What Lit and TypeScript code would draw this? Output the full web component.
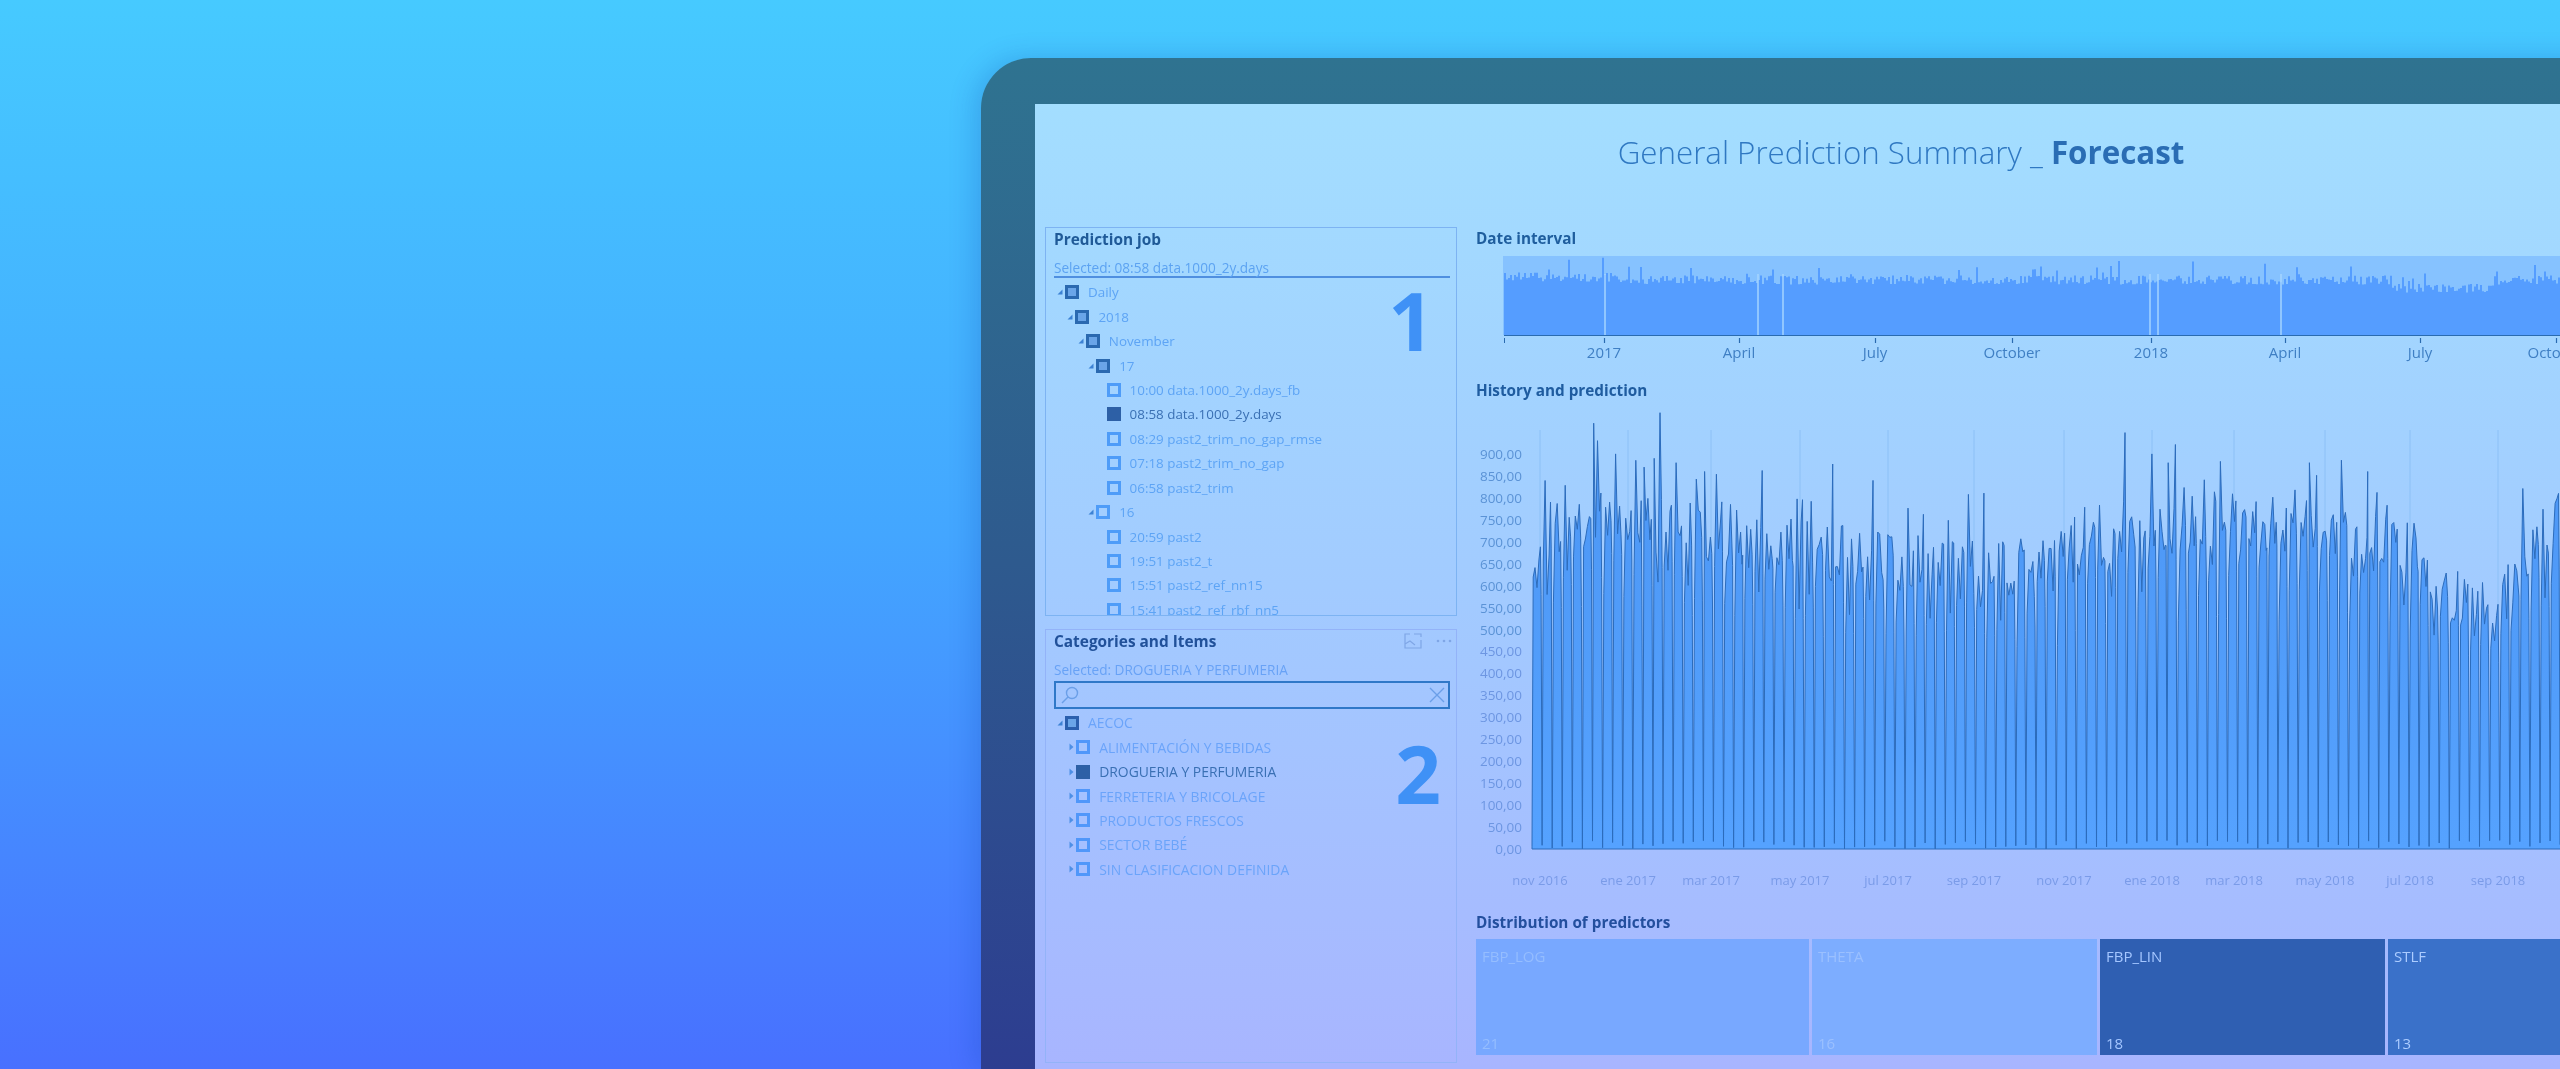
import { LitElement, html, css, svg } from "lit";
import { customElement } from "lit/decorators.js";

type Box = "part" | "empty" | "full";
interface Row { label: string; level: number; box: Box; arrow?: "open" | "closed" | ""; on?: boolean; }

const jobRows: Row[] = [
  { label: "Daily", level: 0, box: "part", arrow: "open" },
  { label: "2018", level: 1, box: "part", arrow: "open" },
  { label: "November", level: 2, box: "part", arrow: "open" },
  { label: "17", level: 3, box: "part", arrow: "open" },
  { label: "10:00 data.1000_2y.days_fb", level: 4, box: "empty" },
  { label: "08:58 data.1000_2y.days", level: 4, box: "full", on: true },
  { label: "08:29 past2_trim_no_gap_rmse", level: 4, box: "empty" },
  { label: "07:18 past2_trim_no_gap", level: 4, box: "empty" },
  { label: "06:58 past2_trim", level: 4, box: "empty" },
  { label: "16", level: 3, box: "empty", arrow: "open" },
  { label: "20:59 past2", level: 4, box: "empty" },
  { label: "19:51 past2_t", level: 4, box: "empty" },
  { label: "15:51 past2_ref_nn15", level: 4, box: "empty" },
  { label: "15:41 past2_ref_rbf_nn5", level: 4, box: "empty" },
];
const catRows: Row[] = [
  { label: "AECOC", level: 0, box: "part", arrow: "open" },
  { label: "ALIMENTACIÓN Y BEBIDAS", level: 1, box: "empty", arrow: "closed" },
  { label: "DROGUERIA Y PERFUMERIA", level: 1, box: "full", arrow: "closed", on: true },
  { label: "FERRETERIA Y BRICOLAGE", level: 1, box: "empty", arrow: "closed" },
  { label: "PRODUCTOS FRESCOS", level: 1, box: "empty", arrow: "closed" },
  { label: "SECTOR BEBÉ", level: 1, box: "empty", arrow: "closed" },
  { label: "SIN CLASIFICACION DEFINIDA", level: 1, box: "empty", arrow: "closed" },
];

function rng(seed: number) {
  let s = seed;
  return () => {
    s = (s * 1664525 + 1013904223) >>> 0;
    return ((s >>> 8) & 0xffff) / 65535;
  };
}
const ORIGIN = 1476;
const env: [number, number][] = [
  [1532, 730], [1590, 780], [1640, 770], [1700, 755], [1800, 710], [1950, 665], [2050, 670],
  [2100, 745], [2250, 770], [2350, 740], [2410, 720], [2440, 610], [2480, 585], [2510, 600],
  [2530, 730], [2560, 770], [2800, 770],
];
function envAt(x: number) {
  for (let i = 1; i < env.length; i++) {
    if (x <= env[i][0]) {
      const [x0, v0] = env[i - 1];
      const [x1, v1] = env[i];
      return v0 + ((v1 - v0) * (x - x0)) / (x1 - x0);
    }
  }
  return 700;
}
const baseY = 444;
const yOf = (v: number) => baseY - v * 0.439;

/* Offsets of each weekday inside a 10.08px week: the weekly dip is a narrow slit. */
const weekX = [0, 1.2, 3, 5, 7, 8.4, 9.1];
const spikes: Record<number, number> = { 43: 970, 45: 930, 58: 900, 78: 870, 85: 890, 100: 880, 120: 860, 430: 900, 442: 880, 540: 880, 580: 860 };

function buildMain() {
  const r = rng(29);
  let d = `M56 ${baseY}`;
  const days = 860;
  for (let i = 0; i < days; i++) {
    const wk = Math.floor(i / 7);
    const p = i % 7;
    const x = 56 + wk * 10.08 + weekX[p];
    const e = envAt(x + ORIGIN);
    let v: number;
    if (p === 0) v = r() * 20;
    else if (p === 1 || p === 6) v = e * (0.68 + r() * 0.24);
    else if (p === 3) v = e * (0.76 + r() * 0.3);
    else {
      v = e * (0.86 + r() * 0.2);
      if (r() > 0.85) v *= 1.1 + r() * 0.14;
    }
    const sp = spikes[i];
    if (sp) v = sp;
    d += `L${x.toFixed(1)} ${yOf(v).toFixed(1)}`;
  }
  return d + `L${(56 + 123 * 10.08).toFixed(1)} ${baseY}Z`;
}
const mainPath = buildMain();

const miniGaps = [1605, 1758, 1783, 2150, 2158, 2281];
function buildMini() {
  const r = rng(5);
  let d = "M28 85";
  for (let x = 28; x < 1290; x += 2) {
    const abs = x + ORIGIN;
    const e = 55 + (abs < 1620 ? 3 : 0) - (abs > 2390 && abs < 2500 ? 8 : 0);
    const h = e + (r() - 0.5) * 9 + (r() > 0.93 ? 6 + r() * 10 : 0);
    d += `L${x} ${(85 - h).toFixed(1)}L${x + 2} ${(85 - h).toFixed(1)}`;
  }
  return d + "L1290 85Z";
}
const miniPath = buildMini();

const axisY = [900, 850, 800, 750, 700, 650, 600, 550, 500, 450, 400, 350, 300, 250, 200, 150, 100, 50, 0];
const axisX: [string, number][] = [
  ["nov 2016", 1540], ["ene 2017", 1628], ["mar 2017", 1711], ["may 2017", 1800], ["jul 2017", 1888],
  ["sep 2017", 1974], ["nov 2017", 2064], ["ene 2018", 2152], ["mar 2018", 2234], ["may 2018", 2325],
  ["jul 2018", 2410], ["sep 2018", 2498],
];
const miniX: [string, number][] = [
  ["2017", 1604], ["April", 1739], ["July", 1875], ["October", 2012], ["2018", 2151], ["April", 2285],
  ["July", 2420], ["October", 2556],
];
const tiles = [
  { name: "FBP_LOG", n: "21", w: 333, c: "t1" },
  { name: "THETA", n: "16", w: 285, c: "t2" },
  { name: "FBP_LIN", n: "18", w: 285, c: "t3" },
  { name: "STLF", n: "13", w: 370, c: "t4" },
];

@customElement("app-root")
export class AppRoot extends LitElement {
  static styles = css`
    :host {
      display: block;
      width: 2560px;
      height: 1069px;
      overflow: hidden;
      background: linear-gradient(180deg, #46caff 0%, #43a6ff 50%, #4870ff 100%);
      font-family: "Open Sans", "Liberation Sans", sans-serif;
    }
    .stage { padding: 58px 0 0 981px; width: 2800px; box-sizing: border-box; }
    .frame {
      width: 1784px;
      height: 1011px;
      box-sizing: border-box;
      padding: 46px 0 0 54px;
      border-radius: 50px 0 0 0;
      background: linear-gradient(180deg, #2f7390 0%, #2e5a8e 50%, #2d3d90 100%);
      box-shadow: -6px 0 26px rgba(10, 60, 170, 0.22);
    }
    .screen {
      width: 1730px;
      height: 965px;
      overflow: hidden;
      box-sizing: border-box;
      padding: 0 0 0 10px;
      background: linear-gradient(180deg, #a3deff 0%, #a2cbff 50%, #a8b5ff 100%);
      filter: blur(0.45px);
    }
    h1 {
      margin: 0;
      height: 123px;
      box-sizing: border-box;
      padding: 24px 8px 0 0;
      text-align: center;
      font-size: 31.3px;
      line-height: 48px;
      font-weight: 300;
      color: #2f78c2;
    }
    h1 b { font-weight: 700; color: #2a6db4; }
    .cols { display: flex; gap: 19px; }
    .side { width: 412px; display: flex; flex-direction: column; gap: 13px; flex: none; }
    .panel {
      position: relative;
      box-sizing: border-box;
      border: 1px solid #7db3f2;
      padding: 0 6px 0 8px;
      overflow: hidden;
    }
    .p1 { height: 389px; }
    .p2 { height: 434px; border-color: #93b3f8; }
    .head {
      display: flex;
      justify-content: space-between;
      align-items: center;
      height: 22px;
      font-size: 15.4px;
      font-weight: 700;
      color: #1f5a98;
    }
    .p2 .head { color: #21519a; height: 22.5px; }
    .hicons { display: flex; align-items: center; gap: 14px; margin-right: -2px; }
    .sel {
      font-size: 13.6px;
      line-height: 18px;
      color: #5ca3f2;
      margin-top: 8px;
      white-space: nowrap;
    }
    .p1 .sel { border-bottom: 2px solid #4f8fe0; height: 17px; margin-top: 9px; }
    .p2 .sel { margin-top: 8px; color: #68a2f6; height: 20px; }
    .search {
      display: flex;
      justify-content: space-between;
      align-items: center;
      height: 28px;
      box-sizing: border-box;
      border: 2px solid #2f78c8;
      padding: 0 2px 0 4px;
    }
    .tree { padding-top: 2px; }
    .row {
      display: flex;
      align-items: center;
      height: 24.45px;
      font-size: 13.4px;
      color: #5da4f5;
      white-space: nowrap;
    }
    .p2 .row { color: #6ba4fa; font-size: 13.9px; }
    .row.on, .p2 .row.on { color: #3a70b4; }
    .arrow { width: 10px; flex: none; display: flex; justify-content: center; }
    .box { width: 14px; height: 14px; box-sizing: border-box; flex: none; margin-right: 9px; }
    .box.part { border: 3px solid #2a69b0; background: #6aa5e8; }
    .box.empty { border: 3px solid #4e9cf8; }
    .box.full { background: #2d60a6; }
    .p2 .box.empty { border-color: #5097fa; }
    .p2 .box.part { border-color: #2a5fae; }
    .num {
      position: absolute;
      font-family: "Open Sans", sans-serif;
      font-weight: 700;
      font-size: 80px;
      line-height: 80px;
      color: #3f91f6;
    }
    .n1 { right: 22px; top: 52px; }
    .n2 { right: 15px; top: 103px; }
    .main { width: 1290px; flex: none; }
    .title {
      height: 22px;
      line-height: 22px;
      font-size: 15.3px;
      font-weight: 700;
      color: #1f5e9e;
    }
    .t-hist { margin-top: 14px; color: #1f5ca0; }
    .t-dist { margin-top: 16px; color: #234f9e; }
    svg { display: block; }
    .ax { font-family: "Open Sans", sans-serif; font-size: 13.5px; fill: #5b93d6; }
    .axb { font-size: 13px; fill: #7a9be8; }
    .mx { font-size: 15px; fill: #3f7fc4; }
    .chart-mini { margin-top: 1px; }
    .chart-main { margin-top: 4px; }
    .tree-map { display: flex; gap: 3px; margin-top: 6px; height: 116px; }
    .tile {
      flex: none;
      box-sizing: border-box;
      display: flex;
      flex-direction: column;
      justify-content: space-between;
      padding: 6px 6px 1px 6px;
      font-size: 15px;
      line-height: 22px;
    }
    .t1 { background: #78a8ff; color: #95bdff; }
    .t2 { background: #7dadff; color: #9bc0ff; }
    .t3 { background: #2f5fb2; color: #a4c6ff; }
    .t4 { background: #3a71c9; color: #acccff; }
  `;

  private tree(rows: Row[], leafStep: number) {
    return html`<div class="tree">
      ${rows.map(
        (r) => html`<div class="row ${r.on ? "on" : ""}" style="padding-left:${1 + r.level * leafStep}px">
          <span class="arrow">${r.arrow === "open"
            ? html`<svg width="6" height="6" viewBox="0 0 6 6"><path d="M5.5 .5V5.5H.5Z" fill="#3d82d4"/></svg>`
            : r.arrow === "closed"
              ? html`<svg width="5" height="8" viewBox="0 0 5 8"><path d="M.5 .5L4.5 4L.5 7.5Z" fill="#4d8fe6"/></svg>`
              : ""}</span>
          <span class="box ${r.box}"></span>${r.label}
        </div>`
      )}
    </div>`;
  }

  private mini() {
    return html`<svg class="chart-mini" width="1290" height="115" viewBox="0 0 1290 115">
      <rect x="27" y="6" width="1263" height="79" fill="#86c2ff"/>
      <path d=${miniPath} fill="#559dff"/>
      ${miniGaps.map(
        (g) => svg`<line x1=${g - ORIGIN} x2=${g - ORIGIN} y1="24" y2="85" stroke="#a4d4ff" stroke-width="1.5"/>`
      )}
      <line x1="28" x2="1290" y1="85.5" y2="85.5" stroke="#2a6bb0" stroke-width="1.2"/>
      <line x1="28.5" x2="28.5" y1="88" y2="93" stroke="#2a6bb0"/>
      ${miniX.map(
        ([t, x]) => svg`
          <line x1=${x - ORIGIN + 0.5} x2=${x - ORIGIN + 0.5} y1="88" y2="93" stroke="#2a6bb0" stroke-width="1.2"/>
          <text class="ax mx" x=${x - ORIGIN} y="108" text-anchor="middle">${t}</text>`
      )}
    </svg>`;
  }

  private chart() {
    return html`<svg class="chart-main" width="1290" height="490" viewBox="0 0 1290 490">
      <defs>
        <linearGradient id="area" x1="0" x2="0" y1="0" y2="1">
          <stop offset="0" stop-color="#4c96f4"/>
          <stop offset="1" stop-color="#55a2ff"/>
        </linearGradient>
      </defs>
      ${axisX.map(
        ([, x]) => svg`<line x1=${x - ORIGIN} x2=${x - ORIGIN} y1="25" y2="444" stroke="#8cc0f6" stroke-width="1"/>`
      )}
      <path d=${mainPath} fill="url(#area)" stroke="#2c6cbc" stroke-width="1" stroke-linejoin="round"/>
      ${axisY.map(
        (v) => svg`<text class="ax" x="46" y=${yOf(v) + 5} text-anchor="end"
          style="fill:${v > 450 ? "#5b93d6" : "#6d96e2"}">${v === 0 ? "0,00" : `${v},00`}</text>`
      )}
      ${axisX.map(
        ([t, x]) => svg`<text class="ax axb" x=${x - ORIGIN} y="480" text-anchor="middle">${t}</text>`
      )}
    </svg>`;
  }

  render() {
    return html`<div class="stage"><div class="frame"><div class="screen">
      <h1>General Prediction Summary _ <b>Forecast</b></h1>
      <div class="cols">
        <div class="side">
          <section class="panel p1">
            <div class="head">Prediction job</div>
            <div class="sel">Selected: 08:58 data.1000_2y.days</div>
            ${this.tree(jobRows, 10.4)}
            <div class="num n1">1</div>
          </section>
          <section class="panel p2">
            <div class="head">Categories and Items
              <span class="hicons">
                <svg width="18" height="16" viewBox="0 0 18 16" fill="none" stroke="#7fa6e6" stroke-width="1.2">
                  <path d="M6 1H1V15H17V7M10 1H17V4M1 11L6 8L11 12M1 7"/>
                </svg>
                <svg width="16" height="4" viewBox="0 0 16 4" fill="#7fa6e6">
                  <circle cx="2" cy="2" r="1.3"/><circle cx="8" cy="2" r="1.3"/><circle cx="14" cy="2" r="1.3"/>
                </svg>
              </span>
            </div>
            <div class="sel">Selected: DROGUERIA Y PERFUMERIA</div>
            <div class="search">
              <svg width="20" height="20" viewBox="0 0 20 20" fill="none" stroke="#6b9fe8" stroke-width="1.4">
                <circle cx="12" cy="8" r="5.5"/><path d="M8 12L2 18"/>
              </svg>
              <svg width="18" height="18" viewBox="0 0 18 18" fill="none" stroke="#6b9fe8" stroke-width="1.4">
                <path d="M2 2L16 16M16 2L2 16"/>
              </svg>
            </div>
            ${this.tree(catRows, 11.2)}
            <div class="num n2">2</div>
          </section>
        </div>
        <div class="main">
          <div class="title">Date interval</div>
          ${this.mini()}
          <div class="title t-hist">History and prediction</div>
          ${this.chart()}
          <div class="title t-dist">Distribution of predictors</div>
          <div class="tree-map">
            ${tiles.map(
              (t) => html`<div class="tile ${t.c}" style="width:${t.w}px"><span>${t.name}</span><span>${t.n}</span></div>`
            )}
          </div>
        </div>
      </div>
    </div></div></div>`;
  }
}
